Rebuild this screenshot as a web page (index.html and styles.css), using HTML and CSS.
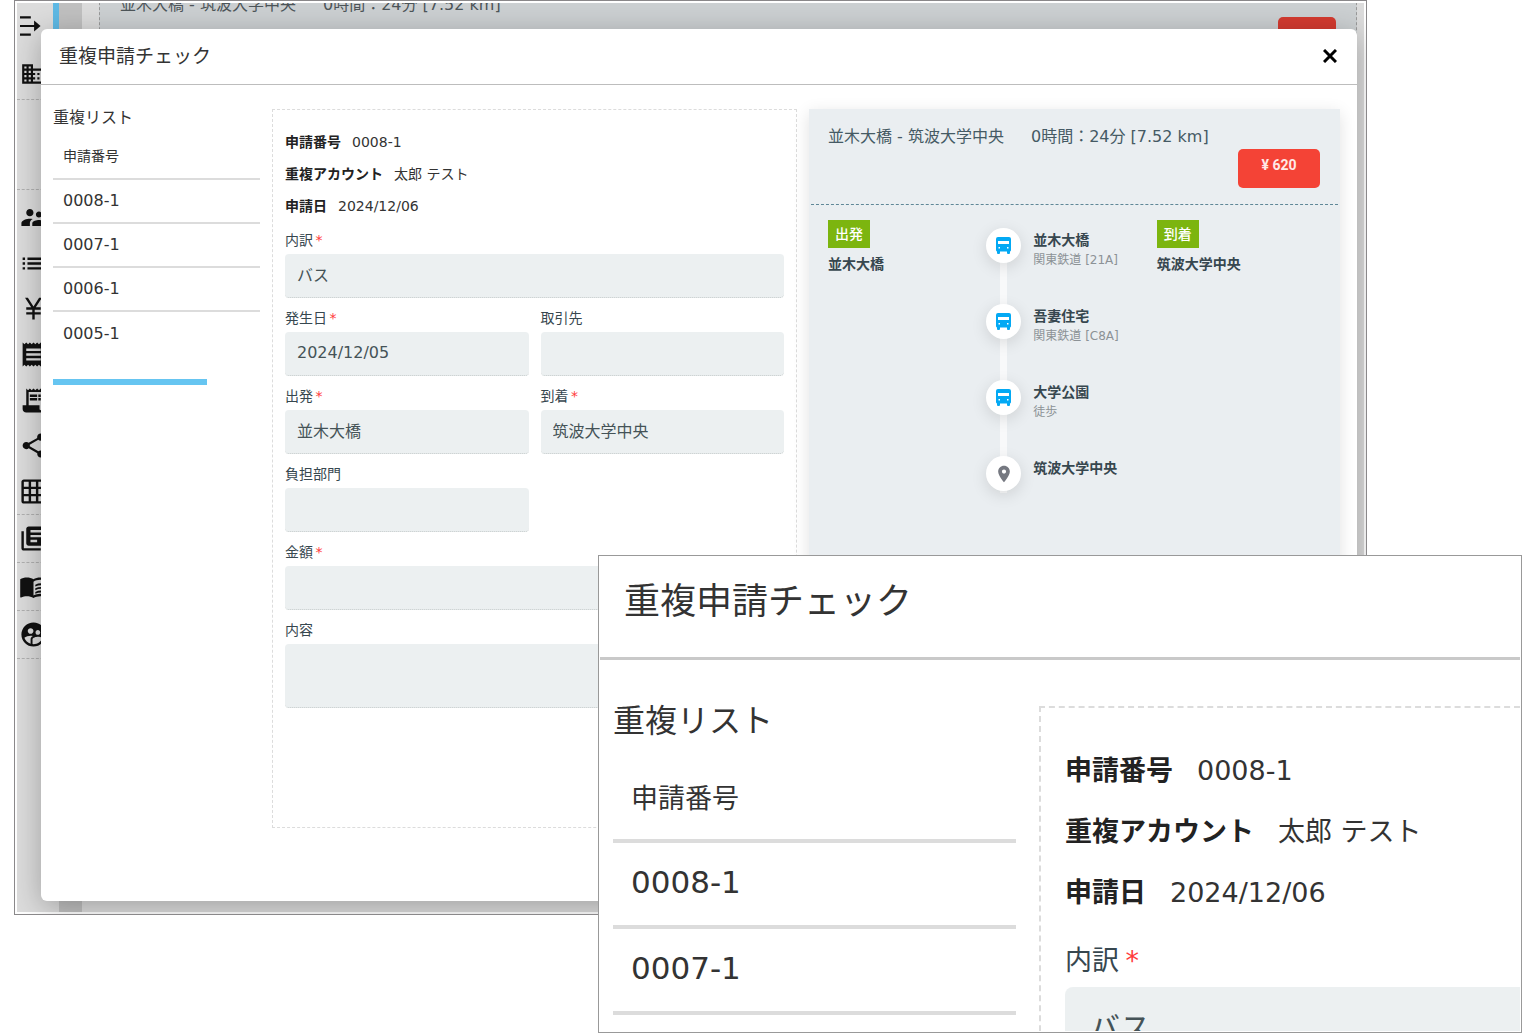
FILE: index.html
```html
<!DOCTYPE html>
<html lang="ja">
<head>
<meta charset="utf-8">
<meta name="viewport" content="width=device-width, initial-scale=1">
<title>重複申請チェック</title>
<link rel="stylesheet" href="styles.css">
</head>
<body>
<div class="page">
  <div class="frame">
    <div class="app">
      <nav class="side" aria-label="メニュー">
        <div class="side-group side-top">
          <svg class="icon icon-sm" viewBox="0 0 24 24"><path d="M0 3h10v2H0zM0 19h10v2H0zM0 11h13V7l6 5-6 5v-4H0z"/></svg>
          <svg class="icon icon-sm" viewBox="0 0 24 24"><path d="M12 7V3H2v18h20V7H12zM6 19H4v-2h2v2zm0-4H4v-2h2v2zm0-4H4V9h2v2zm0-4H4V5h2v2zm4 12H8v-2h2v2zm0-4H8v-2h2v2zm0-4H8V9h2v2zm0-4H8V5h2v2zm10 12h-8v-2h2v-2h-2v-2h2v-2h-2V9h8v10zm-2-8h-2v2h2v-2zm0 4h-2v2h2v-2z"/></svg>
        </div>
        <div class="side-group side-blank"></div>
        <div class="side-group side-main">
          <svg class="icon" viewBox="0 0 24 24"><path d="M16.500 12c1.380 0 2.490-1.120 2.490-2.500S17.880 7 16.500 7C15.120 7 14 8.120 14 9.500s1.120 2.500 2.500 2.500zM9 11c1.660 0 2.990-1.340 2.990-3S10.660 5 9 5C7.340 5 6 6.340 6 8s1.340 3 3 3zm7.500 3c-1.830 0-5.500.92-5.500 2.750V19h11v-2.250c0-1.830-3.670-2.750-5.500-2.750zM9 13c-2.330 0-7 1.170-7 3.500V19h7v-2.250c0-.85.33-2.340 2.370-3.470C10.500 13.100 9.660 13 9 13z"/></svg>
          <svg class="icon" viewBox="0 0 24 24"><path d="M3 13h2v-2H3v2zm0 4h2v-2H3v2zm0-8h2V7H3v2zm4 4h14v-2H7v2zm0 4h14v-2H7v2zM7 7v2h14V7H7z"/></svg>
          <svg class="icon" viewBox="0 0 24 24"><path d="M13.920 11H18v2h-5v2h5v2h-5v4h-2v-4H6v-2h5v-2H6v-2h4.080L5 3h2.370L12 10.290 16.630 3H19z"/></svg>
          <svg class="icon" viewBox="0 0 24 24"><path d="M18 17H6v-2h12v2zm0-4H6v-2h12v2zm0-4H6V7h12v2zM3 22l1.500-1.500L6 22l1.500-1.500L9 22l1.500-1.500L12 22l1.500-1.500L15 22l1.500-1.500L18 22l1.500-1.500L21 22V2l-1.500 1.500L18 2l-1.500 1.500L15 2l-1.500 1.500L12 2l-1.500 1.500L9 2 7.500 3.500 6 2 4.500 3.500 3 2v20z"/></svg>
          <svg class="icon" viewBox="0 0 24 24"><path d="M19.500 3.500L18 2l-1.500 1.500L15 2l-1.500 1.500L12 2l-1.500 1.500L9 2 7.500 3.500 6 2v14H3v3c0 1.660 1.340 3 3 3h12c1.660 0 3-1.340 3-3V2l-1.500 1.500zM19 19c0 .55-.45 1-1 1s-1-.45-1-1v-3H8V5h11v14zM9 7h6v2H9zm7 0h2v2h-2zm-7 3h6v2H9zm7 0h2v2h-2z"/></svg>
          <svg class="icon" viewBox="0 0 24 24"><path d="M18 16.080c-.76 0-1.440.3-1.960.77L8.910 12.700c.05-.23.09-.46.09-.7s-.04-.47-.09-.7l7.050-4.110c.54.5 1.250.81 2.040.81 1.660 0 3-1.340 3-3s-1.340-3-3-3-3 1.340-3 3c0 .24.04.47.09.7L8.040 9.810C7.500 9.310 6.790 9 6 9c-1.660 0-3 1.340-3 3s1.340 3 3 3c.79 0 1.500-.31 2.040-.81l7.120 4.160c-.05.21-.08.43-.08.65 0 1.610 1.310 2.920 2.920 2.920s2.920-1.310 2.920-2.920-1.310-2.920-2.920-2.920z"/></svg>
          <svg class="icon" viewBox="0 0 24 24"><path d="M20 2H4c-1.100 0-2 .9-2 2v16c0 1.100.9 2 2 2h16c1.100 0 2-.9 2-2V4c0-1.100-.9-2-2-2zM8 20H4v-4h4v4zm0-6H4v-4h4v4zm0-6H4V4h4v4zm6 12h-4v-4h4v4zm0-6h-4v-4h4v4zm0-6h-4V4h4v4zm6 12h-4v-4h4v4zm0-6h-4v-4h4v4zm0-6h-4V4h4v4z"/></svg>
        </div>
        <div class="side-group side-single">
          <svg class="icon" viewBox="0 0 24 24"><path fill-rule="evenodd" d="M4 6H2v14c0 1.100.9 2 2 2h14v-2H4zM20 2H8c-1.100 0-2 .9-2 2v12c0 1.100.9 2 2 2h12c1.100 0 2-.9 2-2V4c0-1.100-.9-2-2-2zM19 7H9.500V5H19zM19 11H9.500V9H19zM15 15H9.500v-2H15z"/></svg>
        </div>
        <div class="side-group side-single">
          <svg class="icon" viewBox="0 0 24 24"><path d="M21 5c-1.110-.35-2.330-.5-3.500-.5-1.950 0-4.050.4-5.500 1.500-1.450-1.100-3.550-1.500-5.500-1.500S2.450 4.900 1 6v14.650c0 .25.25.5.5.5.1 0 .15-.05.25-.05C3.100 20.450 5.050 20 6.500 20c1.950 0 4.050.4 5.500 1.500 1.350-.85 3.800-1.500 5.500-1.500 1.650 0 3.350.3 4.750 1.050.1.05.15.05.25.05.25 0 .5-.25.5-.5V6c-.6-.45-1.250-.75-2-1zm0 13.500c-1.100-.35-2.300-.5-3.500-.5-1.700 0-4.150.65-5.500 1.500V8c1.350-.85 3.800-1.500 5.500-1.500 1.200 0 2.400.15 3.500.5v11.500z"/><path d="M13.500 10.500q3-1.500 6.500-1v1.500q-3.500-.5-6.500 1zM13.500 13.500q3-1.500 6.500-1V14q-3.500-.5-6.500 1zM13.500 16.500q3-1.500 6.500-1V17q-3.500-.5-6.500 1z"/></svg>
        </div>
        <div class="side-group side-single">
          <svg class="icon" viewBox="0 0 24 24"><path d="M11.990 2c-5.520 0-10 4.480-10 10s4.480 10 10 10 10-4.480 10-10-4.480-10-10-10zm3.610 6.340c1.070 0 1.930.86 1.930 1.930s-.86 1.930-1.930 1.930-1.930-.86-1.930-1.930.86-1.930 1.930-1.930zm-6-1.580c1.300 0 2.360 1.060 2.360 2.360s-1.060 2.360-2.360 2.360-2.360-1.060-2.360-2.360 1.050-2.360 2.360-2.360zm0 9.130v3.750c-2.400-.75-4.300-2.600-5.140-4.960 1.050-1.120 3.670-1.690 5.140-1.690.53 0 1.200.08 1.900.22-1.640.87-1.900 2.020-1.900 2.680zM11.990 20c-.27 0-.53-.01-.79-.04v-4.070c0-1.420 2.940-2.130 4.400-2.130 1.070 0 2.920.39 3.840 1.150-1.170 2.970-4.060 5.090-7.450 5.090z"/></svg>
        </div>
      </nav>
      <div class="side-thumb"></div>
      <div class="gutter"></div>
      <div class="backdrop">
        <div class="backdrop-card">
          <p class="backdrop-route">並木大橋 - 筑波大学中央<span class="route-time">0時間：24分 [7.52 km]</span></p>
          <div class="backdrop-fare"></div>
        </div>
      </div>
    </div>

    <section class="modal" role="dialog" aria-label="重複申請チェック">
      <header class="modal-head">
        <h1 class="modal-title">重複申請チェック</h1>
        <button class="close" type="button" aria-label="閉じる"><svg class="close-icon" viewBox="0 0 14 14"><path d="M1 1l12 12M13 1L1 13"/></svg></button>
      </header>
      <div class="modal-body">
        <div class="list">
          <h2 class="list-title">重複リスト</h2>
          <table class="list-table">
            <thead><tr><th scope="col">申請番号</th></tr></thead>
            <tbody>
              <tr><td>0008-1</td></tr>
              <tr><td>0007-1</td></tr>
              <tr><td>0006-1</td></tr>
              <tr><td>0005-1</td></tr>
            </tbody>
          </table>
          <div class="list-bar"></div>
        </div>

        <form class="detail">
          <dl class="info">
            <div class="info-row"><dt>申請番号</dt><dd>0008-1</dd></div>
            <div class="info-row"><dt>重複アカウント</dt><dd>太郎 テスト</dd></div>
            <div class="info-row"><dt>申請日</dt><dd>2024/12/06</dd></div>
          </dl>
          <div class="fields">
            <div class="field wide"><label for="type">内訳 <span class="req">*</span></label><input id="type" type="text" value="バス" readonly></div>
            <div class="field"><label for="date">発生日 <span class="req">*</span></label><input id="date" type="text" value="2024/12/05" readonly></div>
            <div class="field"><label for="client">取引先</label><input id="client" type="text" readonly></div>
            <div class="field"><label for="from">出発 <span class="req">*</span></label><input id="from" type="text" value="並木大橋" readonly></div>
            <div class="field"><label for="to">到着 <span class="req">*</span></label><input id="to" type="text" value="筑波大学中央" readonly></div>
            <div class="field half"><label for="dept">負担部門</label><input id="dept" type="text" readonly></div>
            <div class="field wide"><label for="amount">金額 <span class="req">*</span></label><input id="amount" type="text" readonly></div>
            <div class="field wide"><label for="note">内容</label><textarea id="note" readonly></textarea></div>
          </div>
        </form>

        <section class="route">
          <header class="route-head">
            <p class="route-title">並木大橋 - 筑波大学中央<span class="route-time">0時間：24分 [7.52 km]</span></p>
            <button class="fare" type="button">¥ 620</button>
          </header>
          <div class="route-body">
            <div class="end"><span class="tag">出発</span><strong class="end-name">並木大橋</strong></div>
            <ol class="stops">
              <li class="stop"><span class="dot"><svg class="bus" viewBox="0 0 15 17"><path fill-rule="evenodd" d="M2 0h11q2 0 2 2v11q0 1-1 1.500V16q0 1-1 1h-1q-1 0-1-1v-1.500H4V16q0 1-1 1H2q-1 0-1-1v-1.500Q0 14 0 13V2q0-2 2-2zM2 4v3h11V4zM2.500 10v1.500H4V10zM11 10v1.500h1.500V10z"/></svg></span><div class="stop-text"><strong>並木大橋</strong><small>関東鉄道 [21A]</small></div></li>
              <li class="stop"><span class="dot"><svg class="bus" viewBox="0 0 15 17"><path fill-rule="evenodd" d="M2 0h11q2 0 2 2v11q0 1-1 1.500V16q0 1-1 1h-1q-1 0-1-1v-1.500H4V16q0 1-1 1H2q-1 0-1-1v-1.500Q0 14 0 13V2q0-2 2-2zM2 4v3h11V4zM2.500 10v1.500H4V10zM11 10v1.500h1.500V10z"/></svg></span><div class="stop-text"><strong>吾妻住宅</strong><small>関東鉄道 [C8A]</small></div></li>
              <li class="stop"><span class="dot"><svg class="bus" viewBox="0 0 15 17"><path fill-rule="evenodd" d="M2 0h11q2 0 2 2v11q0 1-1 1.500V16q0 1-1 1h-1q-1 0-1-1v-1.500H4V16q0 1-1 1H2q-1 0-1-1v-1.500Q0 14 0 13V2q0-2 2-2zM2 4v3h11V4zM2.500 10v1.500H4V10zM11 10v1.500h1.500V10z"/></svg></span><div class="stop-text"><strong>大学公園</strong><small>徒歩</small></div></li>
              <li class="stop"><span class="dot"><svg class="pin" viewBox="0 0 24 24"><path d="M12 2C8.130 2 5 5.130 5 9c0 5.250 7 13 7 13s7-7.750 7-13c0-3.870-3.130-7-7-7zm0 9.500c-1.380 0-2.500-1.120-2.500-2.500s1.120-2.500 2.500-2.500 2.500 1.120 2.500 2.500-1.120 2.500-2.500 2.500z"/></svg></span><div class="stop-text"><strong>筑波大学中央</strong></div></li>
            </ol>
            <div class="end"><span class="tag">到着</span><strong class="end-name">筑波大学中央</strong></div>
          </div>
        </section>
      </div>
    </section>
  </div>

  <aside class="callout">
    <div class="callout-view">
      <header class="modal-head"><h2 class="modal-title">重複申請チェック</h2></header>
      <div class="modal-body">
        <div class="list">
          <h3 class="list-title">重複リスト</h3>
          <table class="list-table">
            <thead><tr><th scope="col">申請番号</th></tr></thead>
            <tbody>
              <tr><td>0008-1</td></tr>
              <tr><td>0007-1</td></tr>
              <tr><td></td></tr>
            </tbody>
          </table>
        </div>
        <div class="detail">
          <dl class="info">
            <div class="info-row"><dt>申請番号</dt><dd>0008-1</dd></div>
            <div class="info-row"><dt>重複アカウント</dt><dd>太郎 テスト</dd></div>
            <div class="info-row"><dt>申請日</dt><dd>2024/12/06</dd></div>
          </dl>
          <div class="field"><label for="type-large">内訳 <span class="req">*</span></label><input id="type-large" type="text" value="バス" readonly></div>
        </div>
      </div>
    </div>
  </aside>
</div>
</body>
</html>
```

FILE: styles.css
```css
* { box-sizing: border-box; }

body {
  margin: 0;
  background: #fff;
  color: #333;
  font-family: "DejaVu Sans", "Noto Sans CJK JP", sans-serif;
  font-size: 16px;
}

h1, h2, h3, p, dl, dd, ol { margin: 0; padding: 0; font-weight: 400; }

input, textarea, button { font: inherit; color: inherit; margin: 0; border: 0; }

.page {
  position: relative;
  padding: 0 169px 118px 14px;
  overflow: hidden;
}

.frame {
  position: relative;
  border: 1px solid #8a888a;
  padding: 28px 9px 13px 26px;
  overflow: hidden;
}

/* dimmed application behind the dialog */
.app {
  position: absolute;
  inset: 2px 2px 2px 2px;
  display: flex;
  overflow: hidden;
  background: #dcdcdc;
}

.side { width: 36px; }

.side-group { padding-left: 2px; border-bottom: 1px dashed #b0b0b0; }
.side-top { display: grid; grid-template-rows: 46px 50px; align-items: center; padding-left: 3px; }
.side-blank { height: 90px; }
.side-main { display: grid; grid-template-rows: repeat(7, 1fr); align-items: center; height: 325px; padding-top: 5px; }
.side-single { display: flex; align-items: center; height: 48px; }

.icon { display: block; flex: none; width: 29px; height: 29px; fill: #111; }
.icon-sm { width: 26px; height: 26px; }

.side-thumb { width: 6px; height: 300px; background: #5fb9e4; }
.gutter { width: 23px; background: #c0c0c0; }
.backdrop { flex: 1; padding: 0 7px 0 17px; }

.backdrop-card {
  display: flex;
  align-items: flex-start;
  justify-content: space-between;
  height: 300px;
  margin-top: -11px;
  padding: 0 20px;
  border: 1px dashed #999;
  background: #ccd0d2;
}

.backdrop-route { line-height: 24px; color: #4d5559; }
.backdrop-fare { width: 58px; height: 39px; margin-top: 24px; border-radius: 5px; background: #d43b30; }

.modal {
  position: relative;
  border-radius: 6px;
  background: #fff;
  box-shadow: 0 6px 30px rgba(0, 0, 0, .28);
}

.modal-head {
  display: flex;
  align-items: center;
  justify-content: space-between;
  height: 56px;
  padding: 0 20px 2px 18px;
  border-bottom: 1px solid #bdbdbd;
}

.modal-title { font-size: 19px; line-height: 28px; }

.close { display: flex; padding: 0; background: none; }
.close-icon { width: 14px; height: 14px; fill: none; stroke: #000; stroke-width: 3; }

.modal-body {
  display: grid;
  grid-template-columns: 207px 525fr 531fr;
  gap: 12px;
  padding: 24px 17px 73px 12px;
}

.list { margin-top: -3px; }
.list-title { font-size: 16px; line-height: 24px; margin-bottom: 6px; }
.list-table { width: 100%; border-collapse: separate; border-spacing: 0; }

.list-table th,
.list-table td { height: 44px; padding: 0 10px 2px; border-bottom: 2px solid #dcdcdc; text-align: left; }
.list-table th { padding-bottom: 4px; font-size: 14px; font-weight: 400; }
.list-table tr:last-child td { border-bottom: 0; }
.list-bar { width: 154px; height: 6px; margin-top: 23px; background: #66c5f1; }

.detail {
  padding: 16px 12px 119px;
  border: 1px dashed #dcdcdc;
}

.info { margin-bottom: 8px; font-size: 14px; line-height: 32px; }
.info-row { display: flex; gap: 11px; }
.info dt { font-weight: 700; color: #222; }

.fields { display: grid; grid-template-columns: 1fr 1fr; gap: 10px 12px; }
.wide { grid-column: 1 / -1; }
.half { grid-column: 1; }

.field { display: flex; flex-direction: column; gap: 4px; color: #37474f; }
.field label { font-size: 14px; line-height: 20px; }
.field .req { margin-left: -2px; color: #ff3b3b; }

.field input,
.field textarea {
  width: 100%;
  height: 44px;
  padding: 0 12px 3px;
  border-bottom: 1px dotted #c4caca;
  border-radius: 4px;
  background: #ecf0f1;
  color: #455357;
  resize: none;
}
.field textarea { height: 64px; }

.route {
  padding: 0 2px;
  background: #eaeef1;
  color: #455a64;
  box-shadow: 0 4px 16px rgba(0, 0, 0, .12);
}

.route-head {
  display: flex;
  flex-direction: column;
  padding: 16px 18px 16px 17px;
  border-bottom: 1px dashed #5f8797;
}
.route-title { line-height: 24px; }
.route-time { margin-left: 27px; }

.fare {
  align-self: flex-end;
  width: 82px;
  height: 39px;
  padding: 0 0 8px;
  border-radius: 5px;
  background: #f44336;
  color: #ffe9e7;
  font-family: Roboto, sans-serif;
  font-size: 14px;
  font-weight: 700;
}

.route-body {
  display: grid;
  grid-template-columns: 158fr 170fr 165fr;
  padding: 15px 16px 0 17px;
  color: #37474f;
}

.end { display: flex; flex-direction: column; align-items: flex-start; font-size: 14px; }
.tag { padding: 0 7px; background: #7cb50f; color: #fff; font-weight: 500; line-height: 28px; }
.end-name { margin-top: 4px; line-height: 24px; }

.stops { padding-top: 8px; list-style: none; }
.stop { display: flex; gap: 12px; height: 76px; background: linear-gradient(#f8f9fa, #f8f9fa) 14px 0 / 7px 100% no-repeat; }
.stop:last-child { height: 37px; }
.stop:first-child { background-position-y: 20px; }

.dot {
  display: flex;
  flex: none;
  align-items: center;
  justify-content: center;
  width: 35px;
  height: 35px;
  border-radius: 50%;
  background: #fff;
  box-shadow: 0 4px 16px rgba(0, 0, 0, .12);
}
.bus { width: 15px; height: 17px; fill: #03a9f4; }
.pin { width: 20px; height: 20px; fill: #757880; }

.stop-text { display: flex; flex-direction: column; padding-top: 2px; white-space: nowrap; }
.stop-text strong { font-size: 14px; line-height: 20px; }
.stop-text small { font-size: 12px; line-height: 20px; color: #8c9296; }

/* enlarged detail laid over the lower right corner */
.callout {
  position: absolute;
  inset: 555px 14px 0 598px;
  padding: 1px;
  border: 1px solid #999;
  background: #fff;
}
.callout-view { height: 100%; overflow: hidden; }

.callout .modal-head { height: 103px; padding: 0 24px 10px; border-bottom: 3px solid #c9c9c9; }
.callout .modal-title { font-size: 36px; line-height: 56px; }
.callout .modal-body { grid-template-columns: 403px 1fr; gap: 23px; padding: 46px 0 0 13px; }
.callout .list { margin-top: -5px; }
.callout .list-title { font-size: 32px; line-height: 40px; margin-bottom: 16px; }
.callout .list-table th,
.callout .list-table td { height: 86px; padding: 0 18px 4px; border-bottom-width: 4px; font-size: 31px; }
.callout .list-table th { font-size: 27px; }
.callout .detail { padding: 32px 0 0 24px; border-width: 2px 0 0 2px; }
.callout .info { margin-bottom: 18px; font-size: 27px; line-height: 61px; }
.callout .info-row { gap: 24px; }
.callout .field { gap: 6px; }
.callout .field label { font-size: 27px; line-height: 40px; }
.callout .field input { height: 84px; padding: 0 24px 6px; border-radius: 8px 0 0 8px; font-size: 31px; }
```
